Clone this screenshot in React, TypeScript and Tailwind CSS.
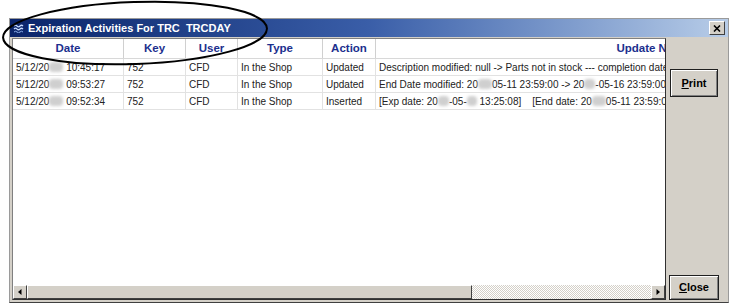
import React from 'react';

const cols = [
  { key: 'date', label: 'Date', w: 'w-[111px]' },
  { key: 'key', label: 'Key', w: 'w-[62px]' },
  { key: 'user', label: 'User', w: 'w-[52px]' },
  { key: 'type', label: 'Type', w: 'w-[85px]' },
  { key: 'action', label: 'Action', w: 'w-[53px]' },
  { key: 'notes', label: 'Update Notes', w: 'w-[556px]' },
];

// blurred-out digits in the original capture
function Smudge({ w = 'w-[11px]' }: { w?: string }) {
  return (
    <span
      className={`inline-block ${w} h-[10px] align-[-1px] bg-[#cfcfcf] blur-[1.5px] rounded-sm`}
    />
  );
}

const rows: React.ReactNode[][] = [
  [
    <>5/12/20<Smudge w="w-[14px]" /> 10:45:17</>,
    '752',
    'CFD',
    'In the Shop',
    'Updated',
    'Description modified: null -> Parts not in stock --- completion date',
  ],
  [
    <>5/12/20<Smudge w="w-[14px]" /> 09:53:27</>,
    '752',
    'CFD',
    'In the Shop',
    'Updated',
    <>End Date modified: 20<Smudge w="w-[14px]" />05-11 23:59:00 -&gt; 20<Smudge w="w-[11px]" />-05-16 23:59:00</>,
  ],
  [
    <>5/12/20<Smudge w="w-[14px]" /> 09:52:34</>,
    '752',
    'CFD',
    'In the Shop',
    'Inserted',
    <>[Exp date: 20<Smudge w="w-[11px]" />-05-<Smudge w="w-[10px]" /> 13:25:08]&nbsp;&nbsp;&nbsp; [End date: 20<Smudge w="w-[14px]" />05-11 23:59:00]</>,
  ],
];

function Raised({ className = '', children }: { className?: string; children?: React.ReactNode }) {
  return (
    <div
      className={`border border-t-white border-l-white border-r-[#404040] border-b-[#404040] bg-[#d4d0c8] ${className}`}
    >
      {children}
    </div>
  );
}

export default function App() {
  return (
    <div className="relative w-[730px] h-[304px] overflow-hidden bg-white pt-[18px] pl-[9px] font-['Liberation_Sans',Arial,sans-serif]">
      {/* dialog window */}
      <div className="w-[720px] h-[285px] flex flex-col border border-[#9a9a9a] border-b-[#404040] bg-[#d4d0c8]">
        {/* title bar */}
        <div className="h-[18px] flex items-center bg-gradient-to-r from-[#0a246a] via-[#3a5ea8] to-[#b8cde8] pl-[3px] pr-[3px]">
          <svg width="13" height="9" viewBox="0 0 13 9" className="mr-[2px]">
            <path d="M1 2 q1.5 -1.5 3 0 t3 0 t3 0" stroke="#c8dcff" strokeWidth="1.2" fill="none" />
            <path d="M1 5 q1.5 -1.5 3 0 t3 0 t3 0" stroke="#c8dcff" strokeWidth="1.2" fill="none" />
            <path d="M1 8 q1.5 -1.5 3 0 t3 0 t3 0" stroke="#8fb2ee" strokeWidth="1" fill="none" />
          </svg>
          <span className="text-white font-bold text-[11px] whitespace-pre leading-none">
            Expiration Activities For TRC  TRCDAY
          </span>
          <div className="ml-auto">
            <Raised className="w-[16px] h-[14px] flex items-center justify-center">
              <svg width="8" height="7" viewBox="0 0 8 7">
                <path d="M1 0.5 L7 6.5 M7 0.5 L1 6.5" stroke="#000" strokeWidth="1.6" />
              </svg>
            </Raised>
          </div>
        </div>

        {/* body */}
        <div className="flex-1 flex pt-px pl-[2px]">
          {/* list panel */}
          <div className="w-[654px] h-[262px] flex flex-col border border-t-[#808080] border-l-[#808080] border-r-[#303030] border-b-[#303030] bg-white">
            <div className="flex-1 overflow-hidden">
              <div className="w-max">
                {/* header */}
                <div className="flex h-[20px] border-b border-[#d8d8d8]">
                  {cols.map((c) => (
                    <div
                      key={c.key}
                      className={`${c.w} shrink-0 flex items-center justify-center border-r border-[#d0d0d0] text-[11.5px] font-bold text-[#1c2f8e]`}
                    >
                      {c.label}
                    </div>
                  ))}
                </div>
                {/* rows */}
                {rows.map((r, i) => (
                  <div key={i} className="flex h-[17px] border-b border-[#e2e2e2]">
                    {r.map((cell, j) => (
                      <div
                        key={j}
                        className={`${cols[j].w} shrink-0 flex items-center pl-[3px] border-r border-[#e2e2e2] text-[10px] text-[#222] whitespace-nowrap overflow-hidden`}
                      >
                        <span>{cell}</span>
                      </div>
                    ))}
                  </div>
                ))}
              </div>
            </div>

            {/* horizontal scrollbar */}
            <div className="h-[14px] flex bg-[#d4d0c8]">
              <Raised className="w-[14px] h-[14px] flex items-center justify-center">
                <svg width="4" height="6" viewBox="0 0 4 6">
                  <path d="M3.5 0 L0 3 L3.5 6 Z" fill="#000" />
                </svg>
              </Raised>
              <Raised className="w-[445px] h-[14px]" />
              <div className="flex-1 h-[14px] bg-[repeating-conic-gradient(#d4d0c8_0%_25%,#ffffff_0%_50%)] bg-[length:2px_2px]" />
              <Raised className="w-[14px] h-[14px] flex items-center justify-center">
                <svg width="4" height="6" viewBox="0 0 4 6">
                  <path d="M0.5 0 L4 3 L0.5 6 Z" fill="#000" />
                </svg>
              </Raised>
            </div>
          </div>

          {/* buttons */}
          <div className="flex-1 flex flex-col pt-[31px] pb-[2px] pl-[3px]">
            <div className="pl-px">
              <button className="w-[48px] h-[28px] border border-[#202020] bg-[#d4d0c8] shadow-[inset_1px_1px_0_#fff,inset_-1px_-1px_0_#808080] text-[11px] font-bold text-black">
                <span className="underline">P</span>rint
              </button>
            </div>
            <div className="flex-1" />
            <button className="w-[50px] h-[25px] border border-[#202020] bg-[#d4d0c8] shadow-[inset_1px_1px_0_#fff,inset_-1px_-1px_0_#808080] text-[11px] font-bold text-black">
              <span className="underline">C</span>lose
            </button>
          </div>
        </div>
      </div>

      {/* hand-drawn annotation ellipse */}
      <svg className="absolute inset-0 pointer-events-none" width="730" height="304">
        <ellipse
          cx="135"
          cy="33"
          rx="132"
          ry="31"
          fill="none"
          stroke="#000"
          strokeWidth="2"
          transform="rotate(-2 135 33)"
        />
      </svg>
    </div>
  );
}
